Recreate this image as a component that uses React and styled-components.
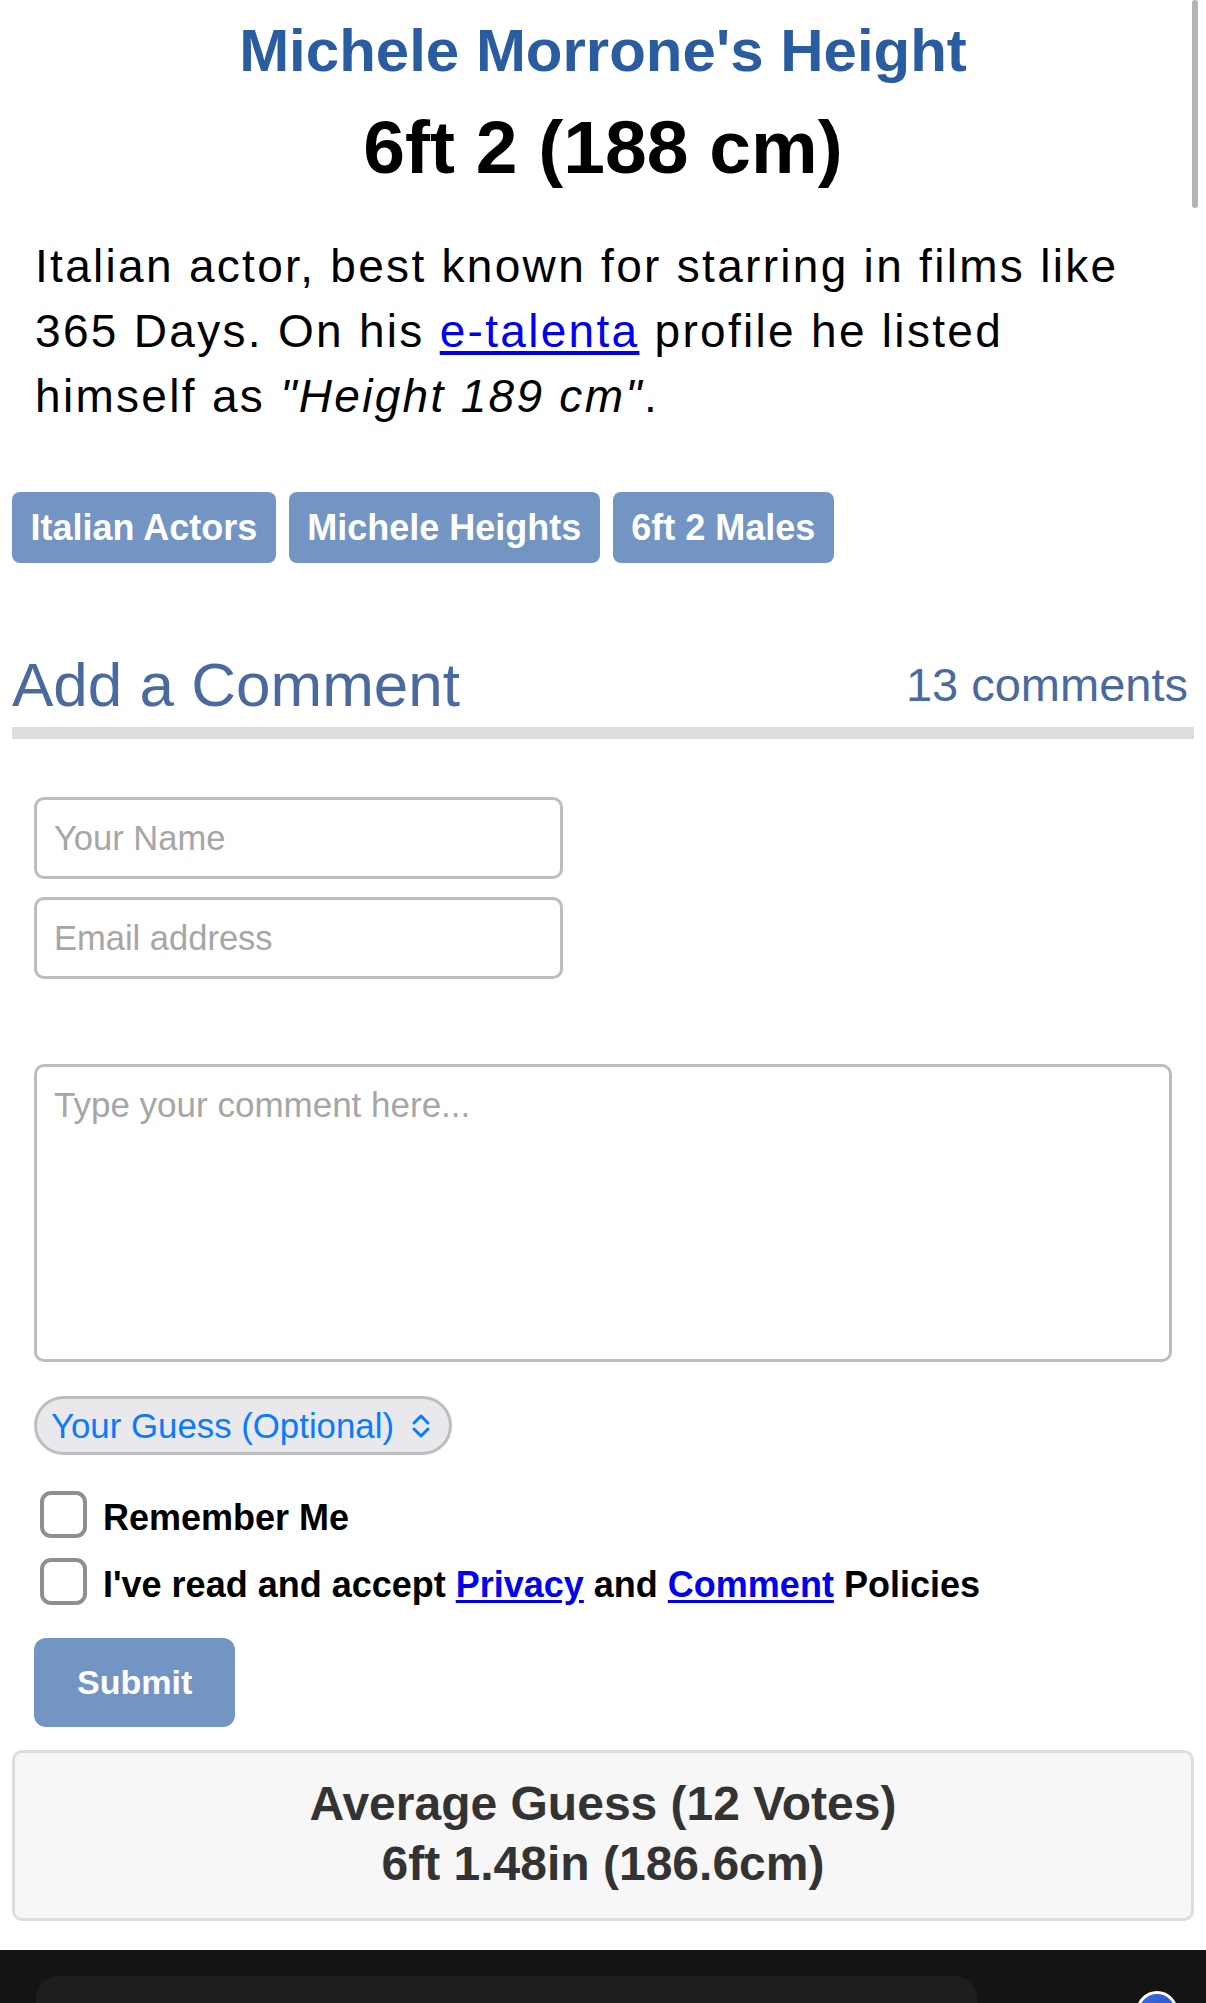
import React from "react";
import styled, { createGlobalStyle } from "styled-components";

const GlobalStyle = createGlobalStyle`
  html, body {
    margin: 0;
    padding: 0;
    background: #ffffff;
    font-family: "Liberation Sans", Arial, Helvetica, sans-serif;
  }
  * { box-sizing: border-box; }
`;

const Page = styled.main`
  padding: 0 12px;
`;

const Title = styled.h1`
  margin: 16px 0 0;
  font-size: 60px;
  line-height: 69px;
  font-weight: 700;
  color: #2a5ca0;
  text-align: center;
`;

const HeightLine = styled.h2`
  margin: 19px 0 0;
  font-size: 75px;
  line-height: 86px;
  font-weight: 700;
  color: #000;
  text-align: center;
`;

const Bio = styled.p`
  margin: 44px 0 0;
  padding: 0 22px 0 23px;
  font-size: 46px;
  line-height: 65px;
  letter-spacing: 2.3px;
  color: #000;

  a {
    color: #0000ee;
    text-decoration: underline;
    text-underline-offset: 4px;
  }
  em {
    font-style: italic;
  }
`;

const TagList = styled.div`
  margin-top: 63px;
  display: flex;
  flex-wrap: wrap;
  gap: 13px;
`;

const Tag = styled.a`
  display: inline-block;
  background: #7395c3;
  color: #fff;
  font-size: 36px;
  font-weight: 700;
  line-height: 41px;
  padding: 15px 18.5px;
  border-radius: 8px;
  text-decoration: none;
`;

const CommentHeader = styled.div`
  margin-top: 87px;
  display: flex;
  justify-content: space-between;
  align-items: center;
  padding-bottom: 7px;
  border-bottom: 12px solid #dddddd;
`;

const CommentHeading = styled.h3`
  margin: 0;
  font-size: 62px;
  line-height: 70px;
  font-weight: 400;
  color: #4a6a9f;
`;

const CommentCount = styled.span`
  font-size: 47px;
  line-height: 54px;
  color: #4a6a9f;
  padding-right: 6px;
`;

const Form = styled.form`
  margin-top: 58px;
  padding: 0 22px;
  display: flex;
  flex-direction: column;
  align-items: flex-start;
`;

const TextInput = styled.input`
  display: block;
  width: 529px;
  height: 82px;
  margin-top: ${(p) => p.$gap || 0}px;
  border: 3px solid #bdbdbd;
  border-radius: 10px;
  padding: 0 17px;
  font-family: inherit;
  font-size: 34.5px;
  color: #000;
  background: #fff;
  &::placeholder {
    color: #a6a6a6;
  }
`;

const CommentArea = styled.textarea`
  display: block;
  width: 100%;
  height: 298px;
  margin-top: 85px;
  border: 3px solid #bdbdbd;
  border-radius: 10px;
  padding: 18px 17px;
  font-family: inherit;
  font-size: 35px;
  resize: none;
  &::placeholder {
    color: #a6a6a6;
  }
`;

const GuessSelect = styled.div`
  margin-top: 34px;
  width: 418px;
  height: 59px;
  border: 3px solid #bdbdbd;
  border-radius: 30px;
  background: #e9e9ed;
  padding: 0 18px 0 14px;
  display: flex;
  align-items: center;
  justify-content: space-between;
  color: #0a7aff;
  font-size: 34.8px;
`;

const CheckRow = styled.label`
  margin-top: ${(p) => p.$gap}px;
  padding-left: 6px;
  display: flex;
  align-items: center;
  gap: 16px;
  font-size: 36px;
  font-weight: 700;
  line-height: 41px;
  color: #000;

  span:last-child {
    padding-top: 6px;
  }

  a {
    color: #0000ee;
    text-decoration: underline;
    text-underline-offset: 3px;
  }
`;

const CheckBox = styled.span`
  width: 47px;
  height: 47px;
  flex: none;
  border: 4px solid #8e8e93;
  border-radius: 11px;
  background: #fff;
`;

const SubmitButton = styled.button`
  margin-top: 33px;
  height: 89px;
  padding: 0 43px;
  border: none;
  border-radius: 12px;
  background: #7395c3;
  color: #fff;
  font-family: inherit;
  font-size: 34px;
  font-weight: 700;
`;

const AverageBox = styled.div`
  margin-top: 23px;
  border: 3px solid #dddddd;
  border-radius: 10px;
  background: #f7f7f7;
  padding: 21px 0 24px;
  text-align: center;
  font-size: 48px;
  font-weight: 700;
  line-height: 60px;
  color: #333;
`;

const Footer = styled.footer`
  margin-top: 29px;
  background: #141414;
  padding: 26px 28px 40px 36px;
  display: flex;
  justify-content: space-between;
  align-items: flex-start;
`;

const FooterPanel = styled.div`
  width: 941px;
  height: 110px;
  background: #1e1e1e;
  border-radius: 22px;
`;

const HelpBubble = styled.div`
  margin-top: 15px;
  width: 42px;
  height: 42px;
  border-radius: 50%;
  border: 3px solid #fff;
  background: linear-gradient(135deg, #3d6fe0, #1f49c2);
  display: flex;
  align-items: center;
  justify-content: center;
`;

const ScrollIndicator = styled.div`
  position: fixed;
  top: 0;
  right: 8px;
  width: 6px;
  height: 208px;
  border-radius: 3px;
  background: #b5b5b5;
`;

const Chevrons = () => (
  <svg width="20" height="28" viewBox="0 0 20 28" fill="none">
    <path d="M3 11 L10 4 L17 11" stroke="#0a7aff" strokeWidth="3" strokeLinecap="round" strokeLinejoin="round" />
    <path d="M3 17 L10 24 L17 17" stroke="#0a7aff" strokeWidth="3" strokeLinecap="round" strokeLinejoin="round" />
  </svg>
);

export default function App() {
  return (
    <>
      <GlobalStyle />
      <ScrollIndicator />
      <Page>
        <Title>Michele Morrone's Height</Title>
        <HeightLine>6ft 2 (188 cm)</HeightLine>
        <Bio>
          Italian actor, best known for starring in films like 365 Days. On his{" "}
          <a href="#">e-talenta</a> profile he listed himself as <em>"Height 189 cm"</em>.
        </Bio>
        <TagList>
          <Tag href="#">Italian Actors</Tag>
          <Tag href="#">Michele Heights</Tag>
          <Tag href="#">6ft 2 Males</Tag>
        </TagList>
        <CommentHeader>
          <CommentHeading>Add a Comment</CommentHeading>
          <CommentCount>13 comments</CommentCount>
        </CommentHeader>
        <Form onSubmit={(e) => e.preventDefault()}>
          <TextInput placeholder="Your Name" />
          <TextInput $gap={18} placeholder="Email address" />
          <CommentArea placeholder="Type your comment here..." />
          <GuessSelect>
            <span>Your Guess (Optional)</span>
            <Chevrons />
          </GuessSelect>
          <CheckRow $gap={36}>
            <CheckBox />
            <span>Remember Me</span>
          </CheckRow>
          <CheckRow $gap={20}>
            <CheckBox />
            <span>
              I've read and accept <a href="#">Privacy</a> and <a href="#">Comment</a> Policies
            </span>
          </CheckRow>
          <SubmitButton type="submit">Submit</SubmitButton>
        </Form>
        <AverageBox>
          Average Guess (12 Votes)
          <br />
          6ft 1.48in (186.6cm)
        </AverageBox>
      </Page>
      <Footer>
        <FooterPanel />
        <HelpBubble>
          <svg width="20" height="20" viewBox="0 0 20 20" fill="none">
            <path d="M6 7 a4 4 0 1 1 5 4 v2" stroke="#fff" strokeWidth="2.5" strokeLinecap="round" />
          </svg>
        </HelpBubble>
      </Footer>
    </>
  );
}
